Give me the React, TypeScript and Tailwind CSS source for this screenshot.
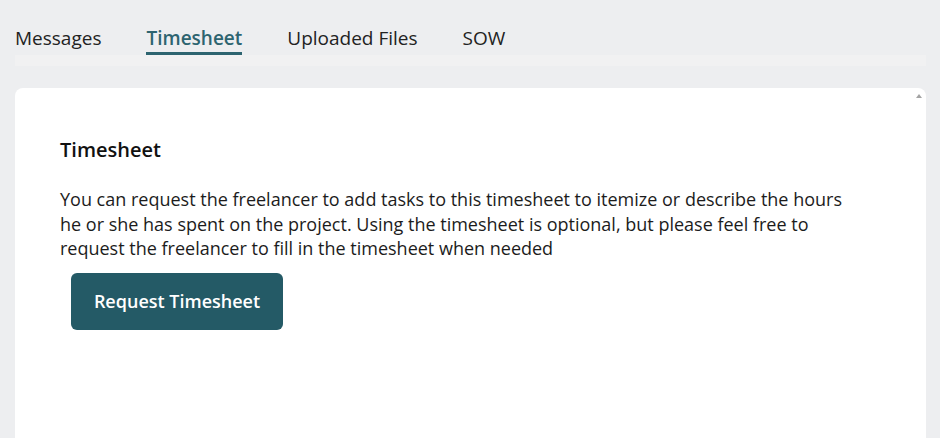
import { useState } from 'react';

const tabs = ['Messages', 'Timesheet', 'Uploaded Files', 'SOW'];

export default function App() {
  const [active, setActive] = useState('Timesheet');

  return (
    <div
      className="w-[940px] h-[438px] overflow-hidden bg-[#edeef0] text-[#1c1c1c]"
      style={{ fontFamily: '"Open Sans", "Liberation Sans", sans-serif' }}
    >
      <div className="h-[26px]" />

      {/* Tabs */}
      <div className="flex gap-[45px] px-[15px]">
        {tabs.map((tab) => (
          <button
            key={tab}
            onClick={() => setActive(tab)}
            className={`pb-[2px] text-[19px] leading-[24px] border-b-[3px] ${
              tab === active
                ? 'text-[#2d6470] font-semibold border-[#2d6470]'
                : 'text-[#222] border-transparent'
            }`}
          >
            {tab}
          </button>
        ))}
      </div>
      <div className="mx-[15px] mr-[14px] h-[11px] bg-[#f1f1f2]" />

      {/* Card */}
      <div className="relative mt-[22px] ml-[15px] mr-[14px] h-[400px] rounded-t-[8px] bg-white px-[45px] pt-[50px]">
        <div className="absolute right-[4px] top-[6px] w-0 h-0 border-x-[3px] border-x-transparent border-b-[4px] border-b-[#a3a3a3]" />
        <h2 className="text-[20px] font-semibold leading-[24px] text-[#111]">Timesheet</h2>
        <p className="mt-[25px] text-[18px] leading-[24.5px] text-[#1c1c1c] whitespace-nowrap">
          You can request the freelancer to add tasks to this timesheet to itemize or describe the hours
          <br />
          he or she has spent on the project. Using the timesheet is optional, but please feel free to
          <br />
          request the freelancer to fill in the timesheet when needed
        </p>
        <button className="mt-[12px] ml-[11px] w-[212px] h-[57px] rounded-[6px] bg-[#245a66] text-white text-[18px] font-semibold">
          Request Timesheet
        </button>
      </div>
    </div>
  );
}
